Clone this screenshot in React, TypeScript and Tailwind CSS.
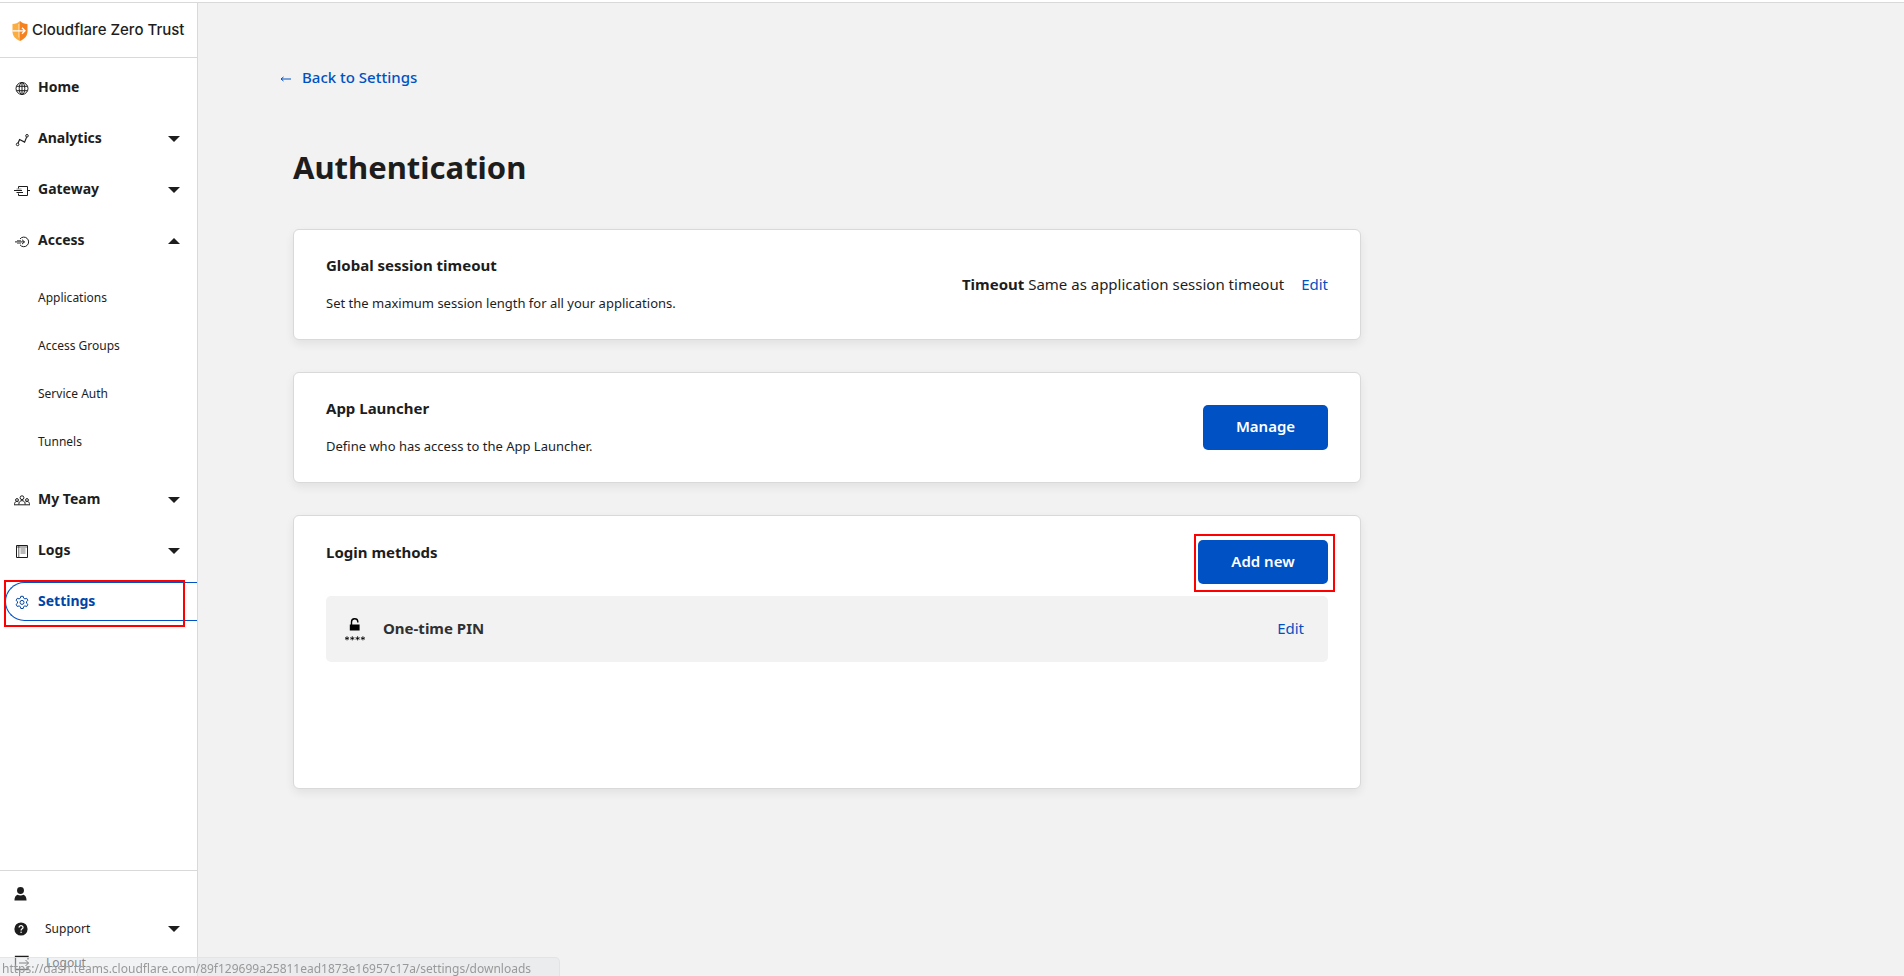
import type { ReactNode } from "react";

function Shield() {
  return (
    <svg width="16" height="20" viewBox="0 0 16 20" className="shrink-0" aria-hidden="true">
      <path d="M8 0C6 2 3.5 2.8.5 3v7.5C.5 15 3.500 18 8 20z" fill="#fbad41" />
      <path d="M8 0c2 2 4.500 2.800 7.500 3v7.500C15.500 15 12.500 18 8 20z" fill="#f6821f" />
      <path d="M.5 9.800H13M10 6.800l3 3-3 3" stroke="#fff" strokeWidth="1.300" fill="none" />
      <path d="M6.800 3v13.500" stroke="#fff" strokeWidth=".9" opacity=".55" />
    </svg>
  );
}

function Icon({ children }: { children: ReactNode }) {
  return (
    <svg
      width="16"
      height="16"
      viewBox="0 0 16 16"
      fill="none"
      stroke="currentColor"
      strokeWidth="1"
      className="shrink-0"
      aria-hidden="true"
    >
      {children}
    </svg>
  );
}

const icons = {
  home: (
    <Icon>
      <circle cx="8" cy="8.500" r="6" />
      <ellipse cx="8" cy="8.500" rx="2.800" ry="6" />
      <path d="M8 2.500v12M2.600 6.300h10.800M2.600 10.700h10.800" />
    </Icon>
  ),
  analytics: (
    <Icon>
      <circle cx="3.600" cy="13.400" r="1.300" />
      <circle cx="13" cy="4.800" r="1.300" />
      <path d="M4 12.200l1.600-3.700 5 2.600 2-5" strokeWidth="1.200" />
    </Icon>
  ),
  gateway: (
    <Icon>
      <path d="M4.500 6.500v-2h9v9h-9v-2M0 8.500h8M2.500 10.500H9M13.500 8.500H16" />
      <path d="M2.500 7h5" strokeWidth=".5" />
    </Icon>
  ),
  access: (
    <Icon>
      <path d="M6 6a4.800 4.800 0 1 1 0 5.800" />
      <path d="M1 8.900h9.500M8 6.700l2.500 2.200L8 11.100" />
      <path d="M3 7.500h4M3 10.300h4" strokeWidth=".6" />
    </Icon>
  ),
  team: (
    <Icon>
      <circle cx="8" cy="5.700" r="1.900" />
      <circle cx="3" cy="8" r="1.400" />
      <circle cx="13" cy="8" r="1.400" />
      <path d="M4.800 12.500c0-5.200 6.400-5.200 6.400 0M.5 12.500c0-3 2-3.500 4-2.600M15.500 12.500c0-3-2-3.500-4-2.600M0 12.800h16" />
    </Icon>
  ),
  logs: (
    <Icon>
      <path d="M2.500 2.500h11v12h-11z" />
      <path d="M4.800 2.500v12M2.500 4h11" strokeWidth=".7" />
      <path d="M6.500 6h5M6.500 8h5M6.500 10h5" stroke="#777" />
    </Icon>
  ),
  settings: (
    <Icon>
      <path
        d="M6.800 2.300h2.400l.4 1.800 1.300.8 1.800-.6 1.200 2.100-1.400 1.200v1.600l1.400 1.200-1.200 2.100-1.800-.6-1.300.8-.4 1.800H6.800l-.4-1.800-1.300-.8-1.800.6-1.200-2.100 1.400-1.200V7.600L2.100 6.400l1.200-2.100 1.800.6 1.300-.8z"
        strokeLinejoin="round"
      />
      <circle cx="8" cy="8.400" r="2" />
    </Icon>
  ),
};

function Caret({ up = false }: { up?: boolean }) {
  return (
    <svg width="12" height="6" viewBox="0 0 12 6" className="shrink-0" aria-hidden="true">
      <path d={up ? "M0 6h12L6 0z" : "M0 0h12L6 6z"} fill="#1d1d1d" />
    </svg>
  );
}

type Item = { label: string; icon: ReactNode; caret?: "up" | "down"; children?: string[] };

const items: Item[] = [
  { label: "Home", icon: icons.home },
  { label: "Analytics", icon: icons.analytics, caret: "down" },
  { label: "Gateway", icon: icons.gateway, caret: "down" },
  {
    label: "Access",
    icon: icons.access,
    caret: "up",
    children: ["Applications", "Access Groups", "Service Auth", "Tunnels"],
  },
  { label: "My Team", icon: icons.team, caret: "down" },
  { label: "Logs", icon: icons.logs, caret: "down" },
];

function NavItem({ item }: { item: Item }) {
  const row = "flex h-[39px] w-full items-center gap-2 pr-[17px] pl-3.5 text-left text-[14px] font-bold";
  return (
    <li>
      {item.caret ? (
        <button type="button" className={row} aria-expanded={item.caret === "up"}>
          {item.icon}
          <span className="flex-1 pb-0.5">{item.label}</span>
          <Caret up={item.caret === "up"} />
        </button>
      ) : (
        <a href="#home" className={row}>
          {item.icon}
          <span className="pb-0.5">{item.label}</span>
        </a>
      )}
      {item.children && (
        <ul className="pt-3.5 pb-0.5">
          {item.children.map((label) => (
            <li key={label}>
              <a href="#access" className="flex h-12 items-center pl-[38px] text-[12px]">
                {label}
              </a>
            </li>
          ))}
        </ul>
      )}
    </li>
  );
}

function Sidebar() {
  return (
    <aside className="flex w-[198px] shrink-0 flex-col border-r border-[#d9d9d9] bg-white">
      <div className="flex h-[55px] items-center gap-1 border-b border-[#d9d9d9] pt-px pl-3 font-['Inter',sans-serif] text-[15px] font-medium whitespace-nowrap">
        <Shield />
        Cloudflare Zero Trust
      </div>
      <nav className="flex-1 pt-2.5">
        <ul className="flex flex-col gap-3">
          {items.map((item) => (
            <NavItem key={item.label} item={item} />
          ))}
          <li className="relative">
            <a
              href="#settings"
              aria-current="page"
              className="ml-[5px] flex h-[39px] items-center gap-2 rounded-l-full border border-r-0 border-[#0051c3] pl-2 text-[14px] font-bold text-[#0045a6]"
            >
              {icons.settings}
              <span className="pb-0.5">Settings</span>
            </a>
            <span className="pointer-events-none absolute -top-0.5 left-1 h-[47px] w-[181px] border-2 border-[#ff0000]" />
          </li>
        </ul>
      </nav>
      <div className="flex h-[106px] flex-col overflow-hidden border-t border-[#d9d9d9] pt-1.5 pr-[17px] pl-3.5 text-[12px]">
        <button type="button" aria-label="Account" className="flex h-[34px] shrink-0 items-center">
          <svg width="13" height="14" viewBox="0 0 13 15" fill="#1d1d1d" aria-hidden="true">
            <circle cx="6.500" cy="3.800" r="3.700" />
            <path d="M0 14.500c0-3.700 1.500-5.500 3.200-6.100 2 1.100 4.600 1.100 6.600 0 1.700.6 3.200 2.400 3.200 6.100z" />
          </svg>
        </button>
        <button type="button" className="flex h-9 shrink-0 items-center gap-[17px] text-left">
          <svg width="14" height="14" viewBox="0 0 14 14" aria-hidden="true">
            <circle cx="7" cy="7" r="6.600" fill="#1d1d1d" />
            <path d="M5.100 5.600c0-2.600 3.900-2.400 3.900-.2 0 1.400-1.900 1.300-1.900 3" stroke="#fff" strokeWidth="1.300" fill="none" />
            <circle cx="7.100" cy="10.200" r=".8" fill="#fff" />
          </svg>
          <span className="flex-1">Support</span>
          <Caret />
        </button>
        <button type="button" className="flex h-8 shrink-0 items-center gap-4 text-left">
          <svg width="16" height="16" viewBox="0 0 16 16" fill="none" stroke="#1d1d1d" className="shrink-0" aria-hidden="true">
            <path d="M14 4.500v-3H1.500v13H14v-3" strokeWidth="1.300" />
            <path d="M5 8h9.500M11.500 5l3 3-3 3" />
          </svg>
          Logout
        </button>
      </div>
    </aside>
  );
}

const card = "rounded-md border border-[#d9d9d9] bg-white px-8 shadow-[0_4px_10px_rgba(0,0,0,0.07)]";
const primary = "rounded-[5px] bg-[#0051c3] pb-0.5 text-[15px] font-semibold text-white";

function SettingCard({ title, text, children }: { title: string; text: string; children: ReactNode }) {
  return (
    <section className={`${card} flex h-[111px] items-center justify-between`}>
      <div className="pb-0.5">
        <h2 className="text-[15px] leading-5 font-bold">{title}</h2>
        <p className="mt-[18px] text-[13px] leading-5">{text}</p>
      </div>
      {children}
    </section>
  );
}

function PinIcon() {
  return (
    <svg width="22" height="26" viewBox="0 0 22 26" aria-hidden="true">
      <path d="M5.800 8.500h9.800v6H5.800z" fill="#000" />
      <path d="M7.500 9V6c0-4.300 6-4.300 6.300-.5v1" stroke="#000" strokeWidth="1.400" fill="none" />
      <path
        d="M3 20.200v4.200M1 21.600l4 1.600M5 21.600l-4 1.600M8.300 20.200v4.200M6.300 21.600l4 1.600M10.300 21.600l-4 1.600M13.600 20.200v4.200M11.600 21.600l4 1.600M15.600 21.600l-4 1.600M18.900 20.200v4.200M16.900 21.600l4 1.600M20.900 21.600l-4 1.600"
        stroke="#000"
        strokeWidth=".8"
      />
    </svg>
  );
}

export default function App() {
  return (
    <div className="flex h-screen flex-col bg-[#f2f2f2] font-['Noto_Sans',sans-serif] text-[#1d1d1d]">
      <div className="h-[3px] shrink-0 border-b border-[#d9d9d9] bg-white" />
      <div className="flex min-h-0 flex-1">
        <Sidebar />
        <main className="min-w-0 flex-1 overflow-auto px-20 pt-[62px]">
          <a href="#settings" className="inline-flex items-center gap-2.5 text-[15px] leading-6 font-medium text-[#0051c3]">
            <svg width="14" height="8" viewBox="0 0 14 8" fill="none" stroke="currentColor" className="mt-1" aria-hidden="true">
              <path d="M3 4h10" />
              <path d="M5.500 2L3 4l2.500 2" />
            </svg>
            Back to Settings
          </a>
          <div className="max-w-[1083px] pl-[15px]">
            <h1 className="mt-[58px] text-[31px] leading-10 font-bold">Authentication</h1>
            <div className="mt-[42px] flex flex-col gap-8">
              <SettingCard title="Global session timeout" text="Set the maximum session length for all your applications.">
                <div className="flex items-center gap-[17px] text-[15px]">
                  <p>
                    <strong>Timeout</strong> Same as application session timeout
                  </p>
                  <a href="#timeout" className="text-[#0051c3]">
                    Edit
                  </a>
                </div>
              </SettingCard>
              <SettingCard title="App Launcher" text="Define who has access to the App Launcher.">
                <button type="button" className={`${primary} h-[45px] w-[125px]`}>
                  Manage
                </button>
              </SettingCard>
              <section className={`${card} h-[274px] pt-6`}>
                <div className="flex items-start justify-between">
                  <h2 className="text-[15px] leading-6 font-bold">Login methods</h2>
                  <div className="relative flex">
                    <button type="button" className={`${primary} h-11 w-[130px]`}>
                      Add new
                    </button>
                    <span className="pointer-events-none absolute -top-1.5 -right-[7px] -bottom-2 -left-1 border-2 border-[#ff0000]" />
                  </div>
                </div>
                <div className="mt-3 flex h-[66px] items-center rounded-[5px] bg-[#f2f2f2] pr-6 pl-[18px]">
                  <PinIcon />
                  <span className="ml-[17px] flex-1 pb-0.5 text-[15px] font-bold text-[#303030]">One-time PIN</span>
                  <a href="#pin" className="pb-0.5 text-[15px] text-[#0051c3]">
                    Edit
                  </a>
                </div>
              </section>
            </div>
          </div>
        </main>
      </div>
      <div className="fixed bottom-0 left-0 h-[19px] rounded-tr-[5px] border-t border-r border-[#dfe1e4]/80 bg-[#e4e6e9]/50 pr-7 pl-0.5 text-[12px] leading-[22px] whitespace-nowrap text-[#999]">
        https://dash.teams.cloudflare.com/89f129699a25811ead1873e16957c17a/settings/downloads
      </div>
    </div>
  );
}
